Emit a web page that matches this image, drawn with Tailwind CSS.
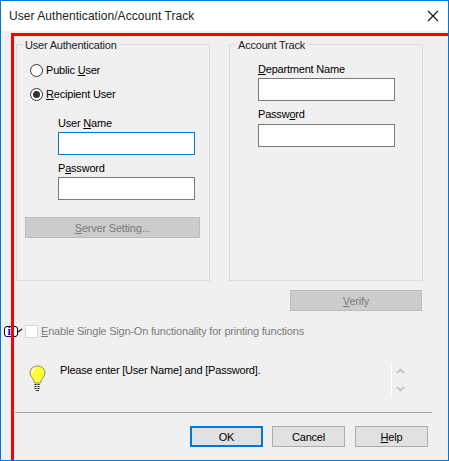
<!DOCTYPE html>
<html><head><meta charset="utf-8"><title>User Authentication/Account Track</title>
<script src="https://cdn.jsdelivr.net/npm/@tailwindcss/browser@4"></script></head>
<body class="m-0 overflow-hidden bg-[#f0f0f0]">
<div class="relative flex h-[461px] w-[449px] flex-col overflow-hidden border border-[#0078d7] bg-[#f0f0f0] font-['Liberation_Sans',sans-serif] text-[11px] leading-[16px] tracking-[-0.2px] text-black">
  <div class="flex h-[30px] shrink-0 items-center justify-between bg-white pr-[9px] pl-[8px]">
    <span class="text-[12px] tracking-[0.06px] text-[#222]">User Authentication/Account Track</span>
    <svg width="12" height="12" viewBox="0 0 12 12" class="mt-[-1px]"><path d="M1 1 L11 11 M11 1 L1 11" stroke="#111" stroke-width="1.1" fill="none"/></svg>
  </div>

  <div class="flex gap-[19px] pt-[13px] pl-[15px]">
    <fieldset class="relative h-[237px] w-[194px] border border-[#dcdcdc]">
      <span class="absolute top-[-8px] left-[6px] bg-[#f0f0f0] px-[2px] text-[#222]">User Authentication</span>
      <div class="flex flex-col pt-[17px] pl-[13px]">
        <label class="flex h-[16px] items-center gap-[3px]"><span class="h-[13px] w-[13px] rounded-full border border-[#333] bg-white"></span><span>Public <u>U</u>ser</span></label>
        <label class="mt-[8px] flex h-[16px] items-center gap-[3px]"><span class="flex h-[13px] w-[13px] items-center justify-center rounded-full border border-[#333] bg-white"><span class="h-[7px] w-[7px] rounded-full bg-[#333]"></span></span><span><u>R</u>ecipient User</span></label>
      </div>
      <div class="flex flex-col pl-[41px]">
        <span class="mt-[13px] h-[16px]">User <u>N</u>ame</span>
        <div class="mt-[1px] h-[23px] w-[137px] border border-[#0078d7] bg-white"></div>
        <span class="mt-[5px] h-[16px]">P<u>a</u>ssword</span>
        <div class="mt-[1px] h-[23px] w-[137px] border border-[#7a7a7a] bg-white"></div>
      </div>
      <button class="mt-[17px] ml-[8px] block h-[21px] w-[175px] border border-[#bcbcbc] bg-[#cccccc] text-[#7a7a7a]"><u>S</u>erver Setting...</button>
    </fieldset>
    <fieldset class="relative h-[237px] w-[194px] border border-[#dcdcdc]">
      <span class="absolute top-[-8px] left-[6px] bg-[#f0f0f0] px-[2px] text-[#222]">Account Track</span>
      <div class="flex flex-col pl-[28px]">
        <span class="mt-[16px] h-[16px]"><u>D</u>epartment Name</span>
        <div class="mt-[1px] h-[23px] w-[137px] border border-[#7a7a7a] bg-white"></div>
        <span class="mt-[5px] h-[16px]">Passw<u>o</u>rd</span>
        <div class="mt-[2px] h-[23px] w-[137px] border border-[#7a7a7a] bg-white"></div>
      </div>
    </fieldset>
  </div>

  <div class="flex justify-end pt-[9px] pr-[26px]">
    <button class="h-[21px] w-[132px] border border-[#bcbcbc] bg-[#cccccc] text-[#7a7a7a]"><u>V</u>erify</button>
  </div>

  <div class="mt-[13px] flex h-[14px] items-center pl-[3px]">
    <div class="relative flex h-[13px] w-[16px] shrink-0 items-center">
      <span class="flex h-[11px] w-[14px] items-center justify-center rounded-[3px] border border-black bg-white pr-[4px] font-['Liberation_Serif',serif] text-[12px] leading-none font-bold text-[#0000e0] underline">i</span>
      <svg width="5" height="5" viewBox="0 0 5 5" class="absolute top-[3px] left-[14px]"><path d="M0 4 L4 1" stroke="#111" stroke-width="1.2"/></svg>
    </div>
    <span class="ml-[5px] h-[13px] w-[13px] shrink-0 border border-[#d9d9d9] bg-white"></span>
    <span class="ml-[3px] text-[#7c7c7c]"><u>E</u>nable Single Sign-On functionality for printing functions</span>
  </div>

  <div class="mt-[24px] flex h-[36px] pl-[28px]">
    <svg width="17" height="27" viewBox="0 0 17 27" class="mt-[3px] shrink-0">
      <path d="M8.500 1 C4 1 1 4 1 8 C1 12 5 13 5.500 18 L11.500 18 C12 13 16 12 16 8 C16 4 13 1 8.500 1 Z" fill="#ffff33" stroke="#8a8a70" stroke-width="1"/>
      <path d="M6 3 C4 4 3.500 6 3.500 8" stroke="#fff" stroke-width="1.500" fill="none"/>
      <path d="M5.500 19.500 H11.500 M5.500 21.500 H11.500 M5.500 23.500 H11.500" stroke="#111" stroke-width="1.200" stroke-dasharray="2 1"/>
      <path d="M7 25.500 H10" stroke="#222" stroke-width="1"/>
    </svg>
    <span class="ml-[14px] w-[331px] shrink-0">Please enter [User Name] and [Password].</span>
    <div class="h-[36px] w-[1px] shrink-0 bg-white"></div>
    <div class="ml-[4px] flex h-[36px] flex-col justify-between py-[6px]">
      <svg width="9" height="6" viewBox="0 0 9 6"><path d="M1 5 L4.500 1.500 L8 5" stroke="#c4c4c4" stroke-width="1.800" fill="none"/></svg>
      <svg width="9" height="6" viewBox="0 0 9 6"><path d="M1 1 L4.500 4.500 L8 1" stroke="#c4c4c4" stroke-width="1.800" fill="none"/></svg>
    </div>
  </div>

  <div class="mt-[14px] ml-[14px] h-[1px] w-[417px] bg-[#a0a0a0]"></div>

  <div class="flex pt-[13px] pl-[189px]">
    <button class="h-[21px] w-[73px] border-2 border-[#0078d7] bg-[#e1e1e1]">OK</button>
    <button class="ml-[9px] h-[21px] w-[73px] border border-[#adadad] bg-[#e1e1e1]">Cancel</button>
    <button class="ml-[10px] h-[21px] w-[73px] border border-[#adadad] bg-[#e1e1e1]"><u>H</u>elp</button>
  </div>

  <div class="absolute top-[32px] right-0 left-[10px] h-[2.500px] bg-[#ff0000]"></div>
  <div class="absolute top-[32px] bottom-0 left-[10px] w-[3px] bg-[#ff0000]"></div>
</div>
</body></html>
